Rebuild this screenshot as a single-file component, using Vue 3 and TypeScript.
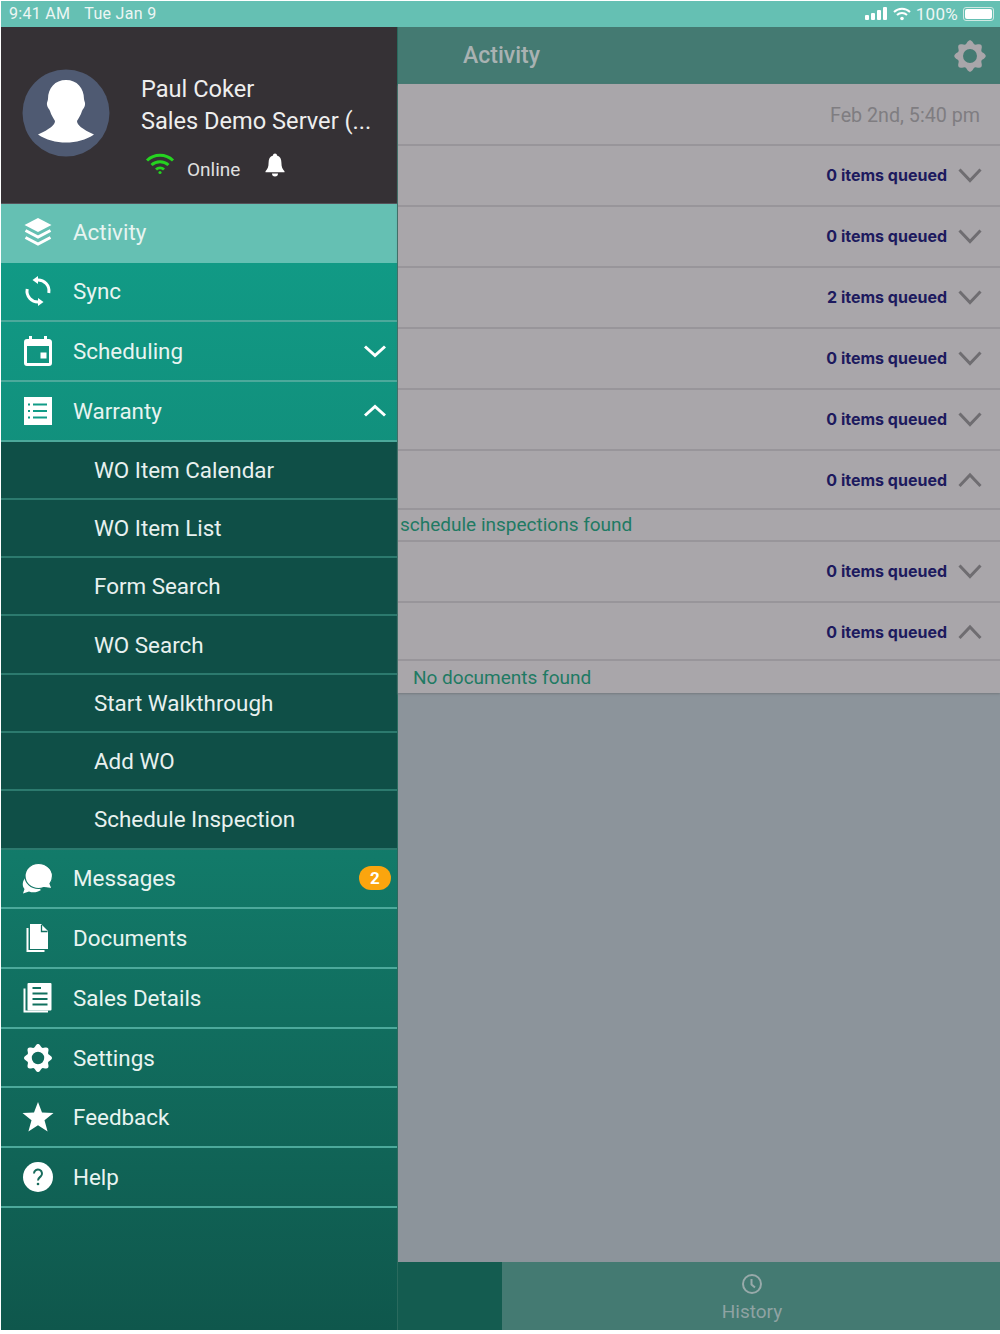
<script setup lang="ts">
type Item = { label: string; icon?: string; chevron?: "up" | "down"; badge?: number };

const topItems: Item[] = [
  { label: "Activity", icon: "layers" },
  { label: "Sync", icon: "sync" },
  { label: "Scheduling", icon: "calendar", chevron: "down" },
  { label: "Warranty", icon: "list", chevron: "up" },
];
const subItems = [
  "WO Item Calendar",
  "WO Item List",
  "Form Search",
  "WO Search",
  "Start Walkthrough",
  "Add WO",
  "Schedule Inspection",
];
const bottomItems: Item[] = [
  { label: "Messages", icon: "messages", badge: 2 },
  { label: "Documents", icon: "documents" },
  { label: "Sales Details", icon: "sales" },
  { label: "Settings", icon: "gear" },
  { label: "Feedback", icon: "star" },
  { label: "Help", icon: "help" },
];

type Row = { queued: number; open?: boolean; note?: string; noteClass?: string };
const rows: Row[] = [
  { queued: 0 },
  { queued: 0 },
  { queued: 2 },
  { queued: 0 },
  { queued: 0 },
  { queued: 0, open: true, note: "schedule inspections found", noteClass: "note-a" },
  { queued: 0 },
  { queued: 0, open: true, note: "No documents found", noteClass: "note-b" },
];

// 8 rounded teeth, same shape for the menu and the header gear
const gear = (() => {
  const cx = 16;
  const cy = 16;
  const teeth = 8;
  let d = "";
  for (let i = 0; i < 360; i += 4) {
    const a = (i * Math.PI) / 180;
    const r = 12.5 + 1.5 * Math.cos(teeth * a);
    d += (i === 0 ? "M" : "L") + (cx + r * Math.cos(a)).toFixed(2) + " " + (cy + r * Math.sin(a)).toFixed(2);
  }
  return d + "ZM16 9.8a6.2 6.2 0 1 0 0 12.4a6.2 6.2 0 1 0 0-12.4Z";
})();
</script>

<template>
  <div class="page">
    <div class="statusbar">
      <span class="clock">9:41 AM</span>
      <span class="date">Tue Jan 9</span>
      <span class="status-right">
        <svg class="signal" width="22" height="14" viewBox="0 0 22 14">
          <rect x="0" y="8" width="4" height="5" rx="1" />
          <rect x="6" y="6" width="4" height="7" rx="1" />
          <rect x="12" y="3" width="4" height="10" rx="1" />
          <rect x="18" y="0" width="4" height="13" rx="1" />
        </svg>
        <svg width="18" height="14" viewBox="0 0 18 14" class="wifi-small">
          <path d="M1 5a11.5 11.5 0 0 1 16 0" />
          <path d="M4 8a7.2 7.2 0 0 1 10 0" />
          <circle cx="9" cy="11.5" r="1.8" />
        </svg>
        <span class="percent">100%</span>
        <span class="battery"><span class="battery-fill"></span></span>
      </span>
    </div>

    <div class="body">
      <nav class="drawer">
        <div class="profile">
          <div class="avatar">
            <svg width="88" height="88" viewBox="0 0 88 88">
              <circle cx="44" cy="44" r="43.5" fill="#4f5a72" />
              <path
                d="M44 11C33 11 26 19 26 30C26 32 24.500 33 25 36C25.500 39 27.500 40 28 42C29 46 32 50 33 52C33 56 28 60 16 65.500C24 71 34 73.500 44 73.500C54 73.500 64 71 72 65.500C60 60 55 56 55 52C56 50 59 46 60 42C60.500 40 62.500 39 63 36C63.500 33 62 32 62 30C62 19 55 11 44 11Z"
                fill="#fff"
              />
            </svg>
          </div>
          <div class="who">
            <div class="who-name">Paul Coker</div>
            <div class="who-server">Sales Demo Server (...</div>
            <div class="who-status">
              <svg class="wifi" width="30" height="24" viewBox="0 0 30 24">
                <path d="M2 8.5a19 19 0 0 1 26 0" />
                <path d="M6.5 13a12.5 12.5 0 0 1 17 0" />
                <path d="M11 17.5a6 6 0 0 1 8 0" />
                <circle cx="15" cy="20.5" r="1.6" />
              </svg>
              <span class="online">Online</span>
              <svg class="bell" width="24" height="26" viewBox="0 0 24 26">
                <path
                  d="M12 1.5c-1.2 0-2 .8-2 1.900C6.800 4.400 5.600 7 5.600 10.500c0 4.500-1 6.500-3.100 8.700v1.100h19v-1.100c-2.100-2.200-3.100-4.200-3.100-8.700c0-3.500-1.200-6.100-4.400-7.100c0-1.100-.8-1.900-2-1.900ZM9 21.500a3 3 0 0 0 6 0Z"
                  fill="#fff"
                />
              </svg>
            </div>
          </div>
        </div>

        <div class="menu">
          <template v-for="list in [topItems, null, bottomItems]">
            <template v-if="list">
              <div
                v-for="item in list"
                :key="item.label"
                class="menu-row"
                :class="{ active: item.label === 'Activity' }"
              >
                <svg class="menu-icon" width="32" height="32" viewBox="0 0 32 32">
                  <g v-if="item.icon === 'layers'">
                    <path d="M16 1L29.500 8L16 15L2.500 8Z" fill="#fff" />
                    <path class="layer-line" d="M3.500 13.500L16 20L28.500 13.500" />
                    <path class="layer-line" d="M3.500 20.500L16 27L28.500 20.500" />
                  </g>
                  <g v-else-if="item.icon === 'sync'" class="line-icon">
                    <path d="M15 5A11 11 0 0 1 26.800 18" />
                    <path d="M17 27A11 11 0 0 1 5.200 14" />
                    <path d="M10.500 5L16 1V9Z" class="fill" />
                    <path d="M21.500 27L16 23V31Z" class="fill" />
                  </g>
                  <g v-else-if="item.icon === 'calendar'">
                    <path
                      fill-rule="evenodd"
                      d="M7 1h3v3h12V1h3v3h1.500A3 3 0 0 1 30 7v21a3 3 0 0 1-3 3H5a3 3 0 0 1-3-3V7a3 3 0 0 1 3-3h2ZM5 11v17h22V11Z"
                      fill="#fff"
                    />
                    <rect x="18.500" y="17.500" width="6" height="6" fill="#fff" />
                  </g>
                  <g v-else-if="item.icon === 'list'">
                    <rect x="2" y="2" width="28" height="28" fill="#fff" />
                    <g class="list-lines">
                      <path d="M11 9.500H25M11 16H25M11 22.500H25" />
                      <path d="M6 9.500H8M6 16H8M6 22.500H8" />
                    </g>
                  </g>
                  <g v-else-if="item.icon === 'messages'">
                    <path d="M4 15C0 19 0 24 2.500 27L1 31.500L7 29.500C11 31 15 30.500 19 28Z" fill="#fff" />
                    <path
                      d="M16.500 1.500C9 1.500 3 7 3 14C3 21 9 26.500 16.500 26.500C18.500 26.500 20.500 26 22 25.500L30 26.500L28 21.500C29.500 19.500 30.500 17 30.500 14C30.500 7 24 1.500 16.500 1.500Z"
                      fill="#fff"
                      stroke="#117565"
                      stroke-width="1.200"
                    />
                  </g>
                  <g v-else-if="item.icon === 'documents'">
                    <path d="M5.500 6V29H22.500" fill="none" stroke="#fff" stroke-width="2" />
                    <path d="M8 2H19L26 9V27H8Z" fill="#fff" />
                    <path d="M19.500 3V9.500H25.500" fill="none" stroke="#117060" stroke-width="1.300" />
                  </g>
                  <g v-else-if="item.icon === 'sales'">
                    <path d="M2.500 6.500V29.500H26" fill="none" stroke="#fff" stroke-width="2" />
                    <rect x="5.500" y="1" width="24" height="27.500" fill="#fff" rx="1" />
                    <path class="sales-lines" d="M10.500 6H19M10.500 11.500H25.500M10.500 17H25.500M10.500 22.500H25.500" />
                  </g>
                  <path v-else-if="item.icon === 'gear'" :d="gear" fill="#fff" fill-rule="evenodd" />
                  <path
                    v-else-if="item.icon === 'star'"
                    d="M16 1L20 11.500L31.500 12L22.500 19.300L25.600 30.500L16 24.200L6.400 30.500L9.500 19.300L0.500 12L12 11.500Z"
                    fill="#fff"
                  />
                  <g v-else-if="item.icon === 'help'">
                    <circle cx="16" cy="16" r="15" fill="#fff" />
                    <path d="M12 12.500a4 4 0 1 1 6.500 3.100c-1.500 1.200-2.500 1.800-2.500 3.900" class="help-mark" />
                    <circle cx="16" cy="23" r="1.300" fill="#176b5c" />
                  </g>
                </svg>
                <span class="menu-label">{{ item.label }}</span>
                <svg
                  v-if="item.chevron"
                  class="menu-chevron"
                  width="24"
                  height="14"
                  viewBox="0 0 24 14"
                >
                  <path :d="item.chevron === 'down' ? 'M2 2.500L12 11.500L22 2.500' : 'M2 11.500L12 2.500L22 11.500'" />
                </svg>
                <span v-if="item.badge" class="badge">{{ item.badge }}</span>
              </div>
            </template>
            <div v-else class="submenu">
              <div v-for="sub in subItems" :key="sub" class="sub-row">{{ sub }}</div>
            </div>
          </template>
        </div>
      </nav>

      <main class="content">
        <header class="topbar">
          <span class="topbar-title">Activity</span>
          <svg width="36" height="36" viewBox="0 0 32 32">
            <path :d="gear" fill="#a9a6aa" fill-rule="evenodd" />
          </svg>
        </header>
        <div class="list">
          <div class="list-date">Feb 2nd, 5:40 pm</div>
          <template v-for="(row, i) in rows" :key="i">
            <div class="list-row" :class="{ open: row.open }">
              <span class="queued">{{ row.queued }} items queued</span>
              <svg width="24" height="16" viewBox="0 0 24 16" class="row-chevron">
                <path :d="row.open ? 'M1.500 14L12 3L22.500 14' : 'M1.500 2.500L12 13.500L22.500 2.500'" />
              </svg>
            </div>
            <div v-if="row.note" class="note" :class="row.noteClass">{{ row.note }}</div>
          </template>
        </div>
        <div class="empty"></div>
        <footer class="tabs">
          <div class="tab-spacer"></div>
          <div class="tab">
            <svg width="22" height="22" viewBox="0 0 22 22">
              <circle cx="11" cy="11" r="9" />
              <path d="M10.500 6V11.500L14 14.500" />
            </svg>
            <span>History</span>
          </div>
        </footer>
      </main>
    </div>
  </div>
</template>

<style>
html,
body {
  margin: 0;
  background: #fff;
}
</style>

<style scoped>
.page {
  width: 999px;
  height: 1329px;
  padding: 1px 0 4px 1px;
  display: flex;
  flex-direction: column;
  font-family: Roboto, "Liberation Sans", sans-serif;
  overflow: hidden;
}

.statusbar {
  height: 26px;
  flex: none;
  box-sizing: border-box;
  background: #65c0b3;
  color: #edf6f4;
  font-size: 16px;
  display: flex;
  align-items: center;
  padding: 0 6px 1px 8px;
  letter-spacing: 0.3px;
}
.date {
  margin-left: 14px;
}
.status-right {
  margin-left: auto;
  display: flex;
  align-items: center;
  gap: 5px;
}
.signal {
  fill: #fff;
}
.wifi-small {
  margin-left: 1px;
  fill: #fff;
}
.wifi-small path {
  fill: none;
  stroke: #fff;
  stroke-width: 2;
}
.percent {
  font-size: 17px;
}
.battery {
  width: 31px;
  height: 14px;
  padding: 1px;
  border: 1px solid #cfe8e3;
  border-radius: 3px;
  box-sizing: border-box;
  display: block;
}
.battery-fill {
  display: block;
  height: 100%;
  background: #fff;
  border-radius: 2px;
}

.body {
  flex: 1;
  display: flex;
  min-height: 0;
}

.drawer {
  width: 397px;
  flex: none;
  display: flex;
  flex-direction: column;
  border-right: 1px solid #2a6a5e;
  box-sizing: border-box;
}

.profile {
  height: 177px;
  flex: none;
  box-sizing: border-box;
  background: #353135;
  border-bottom: 1px solid #55535a;
  display: flex;
  padding: 42px 0 0 21px;
  color: #eeeeee;
}
.avatar {
  width: 88px;
  height: 88px;
  flex: none;
}
.who {
  margin-left: 31px;
  margin-top: 4px;
}
.who-name,
.who-server {
  font-size: 23.6px;
  line-height: 32px;
  height: 32px;
  white-space: nowrap;
}
.who-status {
  display: flex;
  align-items: center;
  margin: 9px 0 0 4px;
  position: relative;
}
.wifi path {
  fill: none;
  stroke: #25d320;
  stroke-width: 3;
}
.wifi circle {
  fill: #25d320;
}
.online {
  font-size: 19px;
  margin-left: 12px;
  color: #e0e0e0;
  padding-top: 12px;
}
.bell {
  margin: 2px 0 0 23px;
}

.menu {
  flex: 1;
  background: linear-gradient(#119d88 0%, #127a69 58%, #0f574c 100%);
}
.menu-row {
  height: 59.7px;
  box-sizing: border-box;
  border-bottom: 2px solid #4ca99b;
  display: flex;
  align-items: center;
  padding: 0 6px 0 21px;
  color: #e8f4f1;
  font-size: 22.4px;
}
.menu-row.active {
  background: #65c0b3;
  border-bottom: none;
  height: 58.5px;
}
.menu-icon {
  flex: none;
  width: 32px;
  height: 32px;
}
.layer-line {
  fill: none;
  stroke: #fff;
  stroke-width: 3;
}
.line-icon path {
  fill: none;
  stroke: #fff;
  stroke-width: 3;
}
.line-icon path.fill {
  fill: #fff;
  stroke: none;
}
.list-lines path {
  fill: none;
  stroke: #129b87;
  stroke-width: 2;
}
.sales-lines {
  fill: none;
  stroke: #11705f;
  stroke-width: 2;
}
.help-mark {
  fill: none;
  stroke: #176b5c;
  stroke-width: 2;
}
.menu-label {
  margin-left: 19px;
  flex: 1;
}
.active .menu-label {
  padding-bottom: 2px;
}
.menu-chevron {
  margin-right: 4px;
}
.menu-chevron path {
  fill: none;
  stroke: #fff;
  stroke-width: 3;
}
.badge {
  width: 32px;
  height: 24px;
  border-radius: 12px;
  background: #fba50e;
  color: #fff;
  font-size: 17px;
  font-weight: 700;
  display: flex;
  align-items: center;
  justify-content: center;
}

.submenu {
  background: #0f4f47;
}
.sub-row {
  height: 58.3px;
  box-sizing: border-box;
  border-bottom: 2px solid #2c7a6e;
  padding-left: 93px;
  display: flex;
  align-items: center;
  color: #e8f1ef;
  font-size: 22.4px;
}

.content {
  flex: 1;
  display: flex;
  flex-direction: column;
  min-width: 0;
  background: #8c949b;
}
.topbar {
  height: 57px;
  flex: none;
  background: #447a72;
  display: flex;
  align-items: center;
  justify-content: space-between;
  padding: 0 12px 0 65px;
  color: #a9b2b2;
  font-size: 23px;
  font-weight: 500;
}

.list {
  background: #a9a6aa;
  flex: none;
  box-shadow: 0 1px 2px #74797e;
}
.list-date {
  height: 62px;
  box-sizing: border-box;
  border-bottom: 2px solid #98959a;
  padding: 2px 20px 0 0;
  display: flex;
  align-items: center;
  justify-content: flex-end;
  color: #7f7d81;
  font-size: 19.7px;
}
.list-row {
  height: 61px;
  box-sizing: border-box;
  border-bottom: 2px solid #98959a;
  display: flex;
  align-items: center;
  justify-content: flex-end;
  padding: 0 18px 1px 0;
}
.list-row.open {
  height: 58.5px;
  padding: 2px 18px 0 0;
}
.queued {
  font-family: Inter, Roboto, sans-serif;
  font-weight: 700;
  font-size: 16px;
  color: #1d1a5e;
  margin-right: 11px;
}
.row-chevron path {
  fill: none;
  stroke: #6f6d71;
  stroke-width: 3;
}
.note {
  height: 32px;
  box-sizing: border-box;
  border-bottom: 2px solid #98959a;
  display: flex;
  align-items: center;
  color: #1f7a63;
  font-size: 19px;
}
.note-a {
  padding-left: 2px;
}
.note-b {
  padding-left: 15px;
  border-bottom: none;
}

.empty {
  flex: 1;
}
.tabs {
  height: 68px;
  flex: none;
  display: flex;
  background: #447a72;
}
.tab-spacer {
  width: 104px;
  background: #145c50;
}
.tab {
  flex: 1;
  display: flex;
  flex-direction: column;
  align-items: center;
  padding: 11px 0 0 2px;
  color: #8fa3a3;
  font-size: 19px;
  gap: 5px;
}
.tab svg {
  fill: none;
  stroke: #98aaaa;
  stroke-width: 2;
}
</style>
